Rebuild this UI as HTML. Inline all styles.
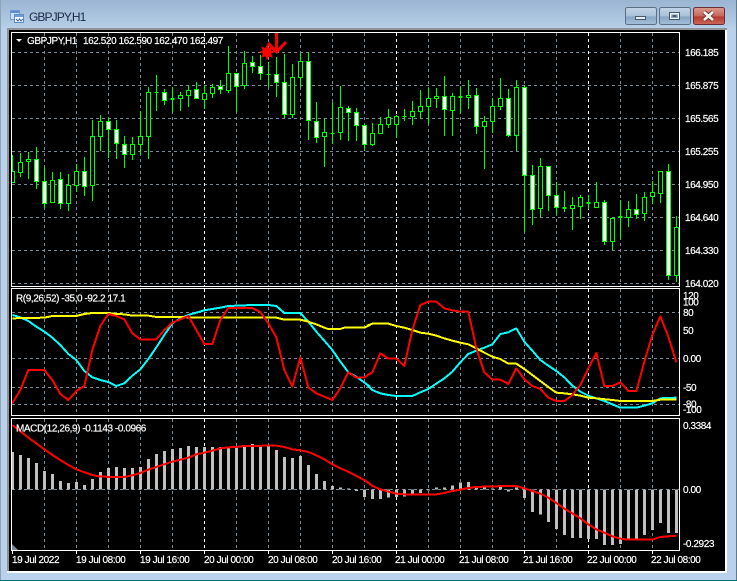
<!DOCTYPE html>
<html><head><meta charset="utf-8"><title>GBPJPY,H1</title>
<style>
html,body{margin:0;padding:0;background:#b9d1ea;width:737px;height:581px;overflow:hidden}
svg{display:block}
text{font-family:"Liberation Sans",sans-serif;font-size:10px;letter-spacing:-.42px;fill:#fff;stroke:#fff;stroke-width:.18px}
.c{shape-rendering:crispEdges}
</style></head><body>
<svg width="737" height="581" viewBox="0 0 737 581" xmlns="http://www.w3.org/2000/svg">
<defs>
<linearGradient id="t" x1="0" y1="0" x2="0" y2="1"><stop offset="0" stop-color="#9ab5d2"/><stop offset="1" stop-color="#b9d1ea"/></linearGradient>
<linearGradient id="b1" x1="0" y1="0" x2="0" y2="1"><stop offset="0" stop-color="#c3d4e6"/><stop offset=".5" stop-color="#a9c1da"/><stop offset=".55" stop-color="#87a5c4"/><stop offset="1" stop-color="#a5c0da"/></linearGradient>
<linearGradient id="b2" x1="0" y1="0" x2="0" y2="1"><stop offset="0" stop-color="#dc9a8e"/><stop offset=".5" stop-color="#c9665a"/><stop offset=".55" stop-color="#b53a2c"/><stop offset="1" stop-color="#cc6a58"/></linearGradient>
<clipPath id="p1"><rect x="12" y="33" width="667" height="253"/></clipPath>
<clipPath id="p2"><rect x="12" y="289" width="667" height="126"/></clipPath>
<clipPath id="p3"><rect x="12" y="419" width="667" height="131"/></clipPath>
</defs>
<rect width="737" height="581" fill="#b9d1ea"/>
<rect width="737" height="30" fill="url(#t)"/>
<rect x="0" y="0" width="1" height="581" fill="#8fa3b8"/>
<rect x="736" y="0" width="1" height="581" fill="#5c7c8c"/>
<rect x="0" y="580" width="737" height="1" fill="#0e6a70"/>
<!-- title icon -->
<g class="c">
<rect x="10.500" y="10.500" width="9" height="9" fill="#cfe0f4" stroke="#6f9ad0" stroke-width="1"/>
<rect x="14.500" y="14.500" width="9" height="8" fill="#f4f8fd" stroke="#5f8ccc" stroke-width="1"/>
<rect x="11" y="11" width="8" height="2" fill="#5f8ccc"/>
<rect x="15" y="15" width="8" height="2" fill="#6f9ad0"/>
</g>
<path d="M16 19l2 2 1.500-2 1.500 2 2-2" fill="none" stroke="#3c62a8" stroke-width="1"/>
<text x="29" y="21" style="font-size:12px;letter-spacing:-.9px;fill:#1b2a44;stroke:none">GBPJPY,H1</text>
<!-- buttons -->
<rect x="625.500" y="7.500" width="31" height="17" rx="2" fill="url(#b1)" stroke="#5b6f86"/>
<rect x="659.500" y="7.500" width="31" height="17" rx="2" fill="url(#b1)" stroke="#5b6f86"/>
<rect x="693.500" y="7.500" width="31" height="17" rx="2" fill="url(#b2)" stroke="#6a3038"/>
<rect x="635.500" y="16.500" width="10" height="3" fill="#e8eef5" stroke="#46586c" class="c"/>
<rect x="669.500" y="12.500" width="10" height="7" fill="none" stroke="#46586c" class="c"/>
<rect x="670.500" y="13.500" width="8" height="5" fill="none" stroke="#eef3f8" class="c"/>
<rect x="672.500" y="15" width="4" height="2" fill="#46586c" class="c"/>
<path d="M704 12l9 8M713 12l-9 8" stroke="#5d3036" stroke-width="4.500"/>
<path d="M704 12l9 8M713 12l-9 8" stroke="#f2f0ee" stroke-width="2.800"/>
<!-- frame -->
<rect x="7" y="28" width="720" height="545" fill="#fff"/>
<rect x="7" y="28" width="720" height="2" fill="#8f9398"/>
<rect x="7" y="28" width="2" height="543" fill="#8f9398"/>
<rect x="9" y="30" width="716" height="541" fill="#000"/>
<!-- grid -->
<g class="c" fill="none" stroke-width="1">
<path stroke="#778899" stroke-dasharray="3 3" d="M12 52.500H679M12 85.500H679M12 118.500H679M12 151.500H679M12 184.500H679M12 217.500H679M12 250.500H679M12 283.500H679M12 312.500H679M12 358.500H679M12 387.500H679M12 404.500H679M12 489.500H679"/>
<path stroke="#778899" stroke-dasharray="3 3" d="M44.500 33V286M76.500 33V286M108.500 33V286M140.500 33V286M172.500 33V286M236.500 33V286M268.500 33V286M300.500 33V286M332.500 33V286M364.500 33V286M428.500 33V286M460.500 33V286M492.500 33V286M524.500 33V286M556.500 33V286M620.500 33V286M652.500 33V286
M44.500 289V416M76.500 289V416M108.500 289V416M140.500 289V416M172.500 289V416M236.500 289V416M268.500 289V416M300.500 289V416M332.500 289V416M364.500 289V416M428.500 289V416M460.500 289V416M492.500 289V416M524.500 289V416M556.500 289V416M620.500 289V416M652.500 289V416
M44.500 419V550M76.500 419V550M108.500 419V550M140.500 419V550M172.500 419V550M236.500 419V550M268.500 419V550M300.500 419V550M332.500 419V550M364.500 419V550M428.500 419V550M460.500 419V550M492.500 419V550M524.500 419V550M556.500 419V550M620.500 419V550M652.500 419V550"/>
<path stroke="#fff" stroke-dasharray="3 3" d="M204.500 33V286M396.500 33V286M588.500 33V286M204.500 289V416M396.500 289V416M588.500 289V416M204.500 419V550M396.500 419V550M588.500 419V550"/>
</g>
<g clip-path="url(#p1)">
<!-- wicks -->
<path class="c" fill="none" stroke="#00ff00" d="M12.500 155V182M20.500 153V177M28.500 152V179M36.500 147V189M44.500 167V208M52.500 172V202M60.500 172V209M68.500 174V211M76.500 164V192M84.500 157V196M92.500 120V201M100.500 115V151M108.500 118V158M116.500 120V159M124.500 136V168M132.500 137V160M140.500 111V155M148.500 87V159M156.500 75V111M164.500 89V105M172.500 87V112M180.500 92V111M188.500 85V107M196.500 82V99M204.500 85V109M212.500 84V98M220.500 80V94M228.500 46V93M236.500 73V112M244.500 51V89M252.500 56V73M260.500 55V80M268.500 62V87M276.500 57V97M284.500 54V118M292.500 64V118M300.500 53V87M308.500 52V140M316.500 102V143M324.500 119V167M332.500 102V144M340.500 86V140M348.500 106V141M356.500 108V141M364.500 124V151M372.500 123V146M380.500 117V134M388.500 109V128M396.500 115V138M404.500 109V121M412.500 101V125M420.500 90V119M428.500 88V124M436.500 88V108M444.500 76V136M452.500 93V136M460.500 86V113M468.500 80V109M476.500 88V134M484.500 116V169M492.500 98V133M500.500 78V110M508.500 89V137M516.500 80V151M524.500 85V232M532.500 165V225M540.500 158V217M548.500 166V211M556.500 182V215M564.500 191V212M572.500 197V230M580.500 195V219M588.500 195V209M596.500 182V207M604.500 200V245M612.500 217V250M620.500 200V239M628.500 201V227M636.500 194V219M644.500 192V221M652.500 181V204M660.500 171V203M668.500 164V280M676.500 216V282"/>
<!-- dojis -->
<path class="c" fill="none" stroke="#00ff00" d="M154.500 92.500h4M266.500 74.500h4M330.500 133.500h4M402.500 116.500h4"/>
<path class="c" fill="none" stroke="#00ff00" stroke-width="2" d="M170.500 99h4M458.500 97h4M562.500 208h4M586.500 203h4M618.500 217h4"/>
<!-- black bodies -->
<path class="c" fill="#000" stroke="#00ff00" d="M10.500 171.500h4v11h-4zM18.500 162.500h4v10h-4zM26.500 159.500h4v2h-4zM50.500 180.500h4v22h-4zM66.500 185.500h4v18h-4zM74.500 171.500h4v14h-4zM90.500 136.500h4v49h-4zM98.500 121.500h4v15h-4zM130.500 144.500h4v10h-4zM138.500 136.500h4v8h-4zM146.500 92.500h4v44h-4zM178.500 95.500h4v3h-4zM186.500 90.500h4v5h-4zM202.500 93.500h4v6h-4zM210.500 87.500h4v6h-4zM226.500 73.500h4v17h-4zM242.500 63.500h4v22h-4zM290.500 77.500h4v37h-4zM298.500 61.500h4v16h-4zM322.500 132.500h4v4h-4zM338.500 107.500h4v25h-4zM370.500 133.500h4v11h-4zM378.500 124.500h4v9h-4zM386.500 117.500h4v7h-4zM394.500 116.500h4v8h-4zM410.500 111.500h4v5h-4zM418.500 106.500h4v5h-4zM426.500 98.500h4v8h-4zM434.500 96.500h4v2h-4zM450.500 96.500h4v14h-4zM466.500 95.500h4v2h-4zM482.500 121.500h4v5h-4zM490.500 106.500h4v15h-4zM498.500 98.500h4v8h-4zM514.500 87.500h4v48h-4zM538.500 166.500h4v42h-4zM570.500 205.500h4v3h-4zM578.500 197.500h4v9h-4zM594.500 202.500h4v5h-4zM610.500 218.500h4v23h-4zM626.500 209.500h4v8h-4zM642.500 197.500h4v16h-4zM650.500 192.500h4v4h-4zM658.500 171.500h4v22h-4zM674.500 227.500h4v48h-4z"/>
<!-- white bodies -->
<path class="c" fill="#fff" stroke="#00ff00" d="M34.500 159.500h4v22h-4zM42.500 181.500h4v22h-4zM58.500 179.500h4v24h-4zM82.500 171.500h4v15h-4zM106.500 121.500h4v8h-4zM114.500 129.500h4v14h-4zM122.500 144.500h4v10h-4zM162.500 92.500h4v8h-4zM194.500 89.500h4v9h-4zM218.500 86.500h4v3h-4zM234.500 73.500h4v13h-4zM250.500 62.500h4v4h-4zM258.500 66.500h4v7h-4zM274.500 74.500h4v8h-4zM282.500 82.500h4v32h-4zM306.500 61.500h4v59h-4zM314.500 121.500h4v16h-4zM346.500 108.500h4v4h-4zM354.500 112.500h4v13h-4zM362.500 125.500h4v19h-4zM442.500 96.500h4v13h-4zM474.500 95.500h4v31h-4zM506.500 98.500h4v37h-4zM522.500 87.500h4v88h-4zM530.500 175.500h4v34h-4zM546.500 166.500h4v29h-4zM554.500 195.500h4v12h-4zM602.500 202.500h4v39h-4zM634.500 209.500h4v5h-4zM666.500 171.500h4v104h-4z"/>
</g>
<!-- MACD histogram -->
<g clip-path="url(#p3)">
<g class="c" fill="none" stroke="#c0c0c0" transform="translate(0,431) scale(.33333)" style="stroke-width:9">
<path d="M37.500 176V63M61.500 176V72M85.500 176V81M109.500 176V96M133.500 176V120M157.500 176V129M181.500 176V150M205.500 176V156M229.500 176V153M253.500 176V162M277.500 176V144M301.500 176V123M325.500 176V111M349.500 176V108M373.500 176V111M397.500 176V111M421.500 176V108M445.500 176V84M469.500 176V69M493.500 176V60M517.500 176V54M541.500 176V51M565.500 176V45M589.500 176V48M613.500 176V48M637.500 176V48M661.500 176V48M685.500 176V50M709.500 176V50M733.500 176V42M757.500 176V39M781.500 176V45M805.500 176V45M829.500 176V57M853.500 176V78M877.500 176V81M901.500 176V75M925.500 176V102M949.500 176V129M973.500 176V150M997.500 176V165M1021.500 176V170M1045.500 176V172M1069.500 176V180M1093.500 176V198"/>
</g>
<g class="c" fill="none" stroke="#c0c0c0" transform="translate(367,431) scale(.33333)" style="stroke-width:9">
<path d="M16.500 176V204M40.500 176V204M64.500 176V200M88.500 176V198M112.500 176V197M136.500 176V190M160.500 176V186M184.500 176V178M208.500 176V169M232.500 176V169M256.500 176V163M280.500 176V155M304.500 176V153M328.500 176V167M352.500 176V170M376.500 176V173M400.500 176V167M424.500 176V182M448.500 176V170M472.500 176V201M496.500 176V243M520.500 176V251M544.500 176V273M568.500 176V294M592.500 176V312M616.500 176V321M640.500 176V321M664.500 176V324M688.500 176V324M712.500 176V342M736.500 176V342M760.500 176V339M784.500 176V324M808.500 176V324M832.500 176V312M856.500 176V297M880.500 176V276M904.500 176V306M928.500 176V306"/>
</g>
</g>
<!-- indicator lines -->
<g fill="none" stroke-linejoin="round" shape-rendering="crispEdges" style="stroke-width:6">
<g clip-path="url(#p2)">
<g transform="translate(0,285) scale(.33333)">
<polyline stroke="#00ffff" points="37,90 61,97 85,108 109,125 133,140 157,158 181,180 205,207 229,225 253,258 277,277 301,285 325,291 349,303 373,295 397,272 421,253 445,222 469,187 493,150 517,115 541,100 565,90 589,83 613,76 637,72 661,68 685,63 757,60 805,60 829,63 853,84 901,84 925,110 949,140 973,167 997,195 1021,230 1045,262 1069,275 1110,305"/>
<polyline stroke="#ffff00" points="37,100 133,98 157,93 229,93 253,87 277,84 325,84 349,87 373,88 397,92 445,92 469,96 541,96 589,98 685,98 829,98 853,104 901,104 925,110 949,118 973,128 985,132 1021,132 1033,128 1093,128 1110,120"/>
<polyline stroke="#ff0000" points="37,355 61,315 85,255 133,255 157,285 181,327 205,345 229,318 253,303 277,195 301,123 325,87 349,93 373,103 397,145 421,163 469,163 493,135 517,113 541,103 565,93 589,135 613,177 637,177 661,105 685,69 757,69 781,81 805,115 829,157 853,255 877,305 901,217 925,307 949,325 997,345 1021,310 1045,262 1069,278 1093,278 1110,265"/>
</g>
<g transform="translate(367,285) scale(.33333)">
<polyline stroke="#00ffff" points="0,300 16,315 40,325 64,330 88,333 136,333 160,322 184,312 208,296 232,280 256,260 280,232 304,207 328,197 352,188 376,178 400,147 424,142 448,130 472,170 496,197 520,225 544,242 568,258 592,277 616,302 640,320 664,332 688,340 712,348 736,358 760,368 808,368 832,362 856,355 880,340 928,338"/>
<polyline stroke="#ffff00" points="0,122 16,116 64,116 88,123 112,128 136,135 160,143 184,146 208,152 232,160 256,167 280,173 304,178 328,190 352,203 376,215 400,222 424,236 448,236 472,252 496,270 520,288 544,306 568,323 592,325 616,328 640,332 664,338 688,340 736,345 760,348 856,348 880,344 928,344"/>
<polyline stroke="#ff0000" points="0,272 16,262 40,205 64,221 88,221 112,243 136,135 160,60 184,50 208,50 232,70 256,76 280,80 304,80 328,190 352,262 376,284 400,284 424,297 448,250 472,283 496,303 520,312 544,338 568,348 592,348 616,330 640,300 664,250 688,204 712,303 736,303 760,292 784,318 808,318 832,230 856,150 880,94 904,155 928,232"/>
</g>
</g>
<g clip-path="url(#p3)">
<polyline transform="translate(0,431) scale(.33333)" stroke="#ff0000" points="37,-18 60,0 85,20 109,37 133,55 157,72 181,87 205,102 229,115 253,124 277,132 301,137 373,138 397,133 421,126 445,116 469,108 493,100 517,92 541,86 565,80 589,70 613,65 637,59 661,52 685,49 709,48 733,45 805,44 829,44 853,48 877,55 901,58 925,63 949,73 973,85 997,100 1021,112 1045,122 1069,135 1093,147 1110,158"/>
<polyline transform="translate(367,431) scale(.33333)" stroke="#ff0000" points="0,153 16,165 40,175 64,182 88,188 112,190 184,191 208,190 232,186 256,180 280,176 304,171 328,168 376,166 448,165 472,172 496,180 520,188 544,200 568,216 592,233 616,247 640,262 664,280 688,295 712,305 736,316 760,323 784,326 856,326 880,318 904,316 928,314"/>
</g>
</g>
<!-- arrow and star -->
<path d="M276.500 33V52M268 43l8.500 9 9.500-10" fill="none" stroke="#ff0000" stroke-width="3"/>
<path fill="#ff0000" d="M267 44l1.700 4 4.300-1.500-2 4 3.500 1.500-3.500 1.700 2 4-4.300-1.500-1.700 4-1.700-4-4.300 1.500 2-4-3.500-1.700 3.500-1.500-2-4 4.300 1.500z"/>
<!-- panel borders -->
<g class="c" fill="none" stroke="#fff">
<rect x="11.500" y="32.500" width="668" height="254"/>
<rect x="11.500" y="288.500" width="668" height="127"/>
<rect x="11.500" y="418.500" width="668" height="132"/>
<path d="M76.500 551v3M140.500 551v3M204.500 551v3M268.500 551v3M332.500 551v3M396.500 551v3M460.500 551v3M524.500 551v3M588.500 551v3M652.500 551v3M12.500 551v3"/>
</g>
<path fill="#778899" d="M12 544l6 6h-6z"/>
<path fill="#fff" d="M16 39h6l-3 3z"/>
<!-- labels -->
<text x="27" y="44">GBPJPY,H1</text>
<text x="83" y="44">162.520 162.590 162.470 162.497</text>
<text x="16" y="301.500">R(9,26,52) -35.0 -92.2 17.1</text>
<text x="16" y="431.500">MACD(12,26,9) -0.1143 -0.0966</text>
<g>
<text x="685" y="56">166.185</text><text x="685" y="89">165.875</text><text x="685" y="122">165.565</text><text x="685" y="155">165.255</text><text x="685" y="188">164.950</text><text x="685" y="221">164.640</text><text x="685" y="254">164.330</text><text x="685" y="287">164.020</text>
<text x="683" y="299">120</text><text x="683" y="305.500">100</text><text x="683" y="316">80</text><text x="683" y="334">50</text><text x="683" y="362">0.00</text><text x="683" y="391">-50</text><text x="683" y="407.500">-80</text><text x="683" y="413">-100</text>
<text x="683" y="429">0.3384</text><text x="683" y="493">0.00</text><text x="683" y="547">-0.2923</text>
<text x="12" y="563">19 Jul 2022</text><text x="76" y="563">19 Jul 08:00</text><text x="140" y="563">19 Jul 16:00</text><text x="204" y="563">20 Jul 00:00</text><text x="268" y="563">20 Jul 08:00</text><text x="332" y="563">20 Jul 16:00</text><text x="395" y="563">21 Jul 00:00</text><text x="459" y="563">21 Jul 08:00</text><text x="523" y="563">21 Jul 16:00</text><text x="587" y="563">22 Jul 00:00</text><text x="651" y="563">22 Jul 08:00</text>
</g>
</svg>
</body></html>
